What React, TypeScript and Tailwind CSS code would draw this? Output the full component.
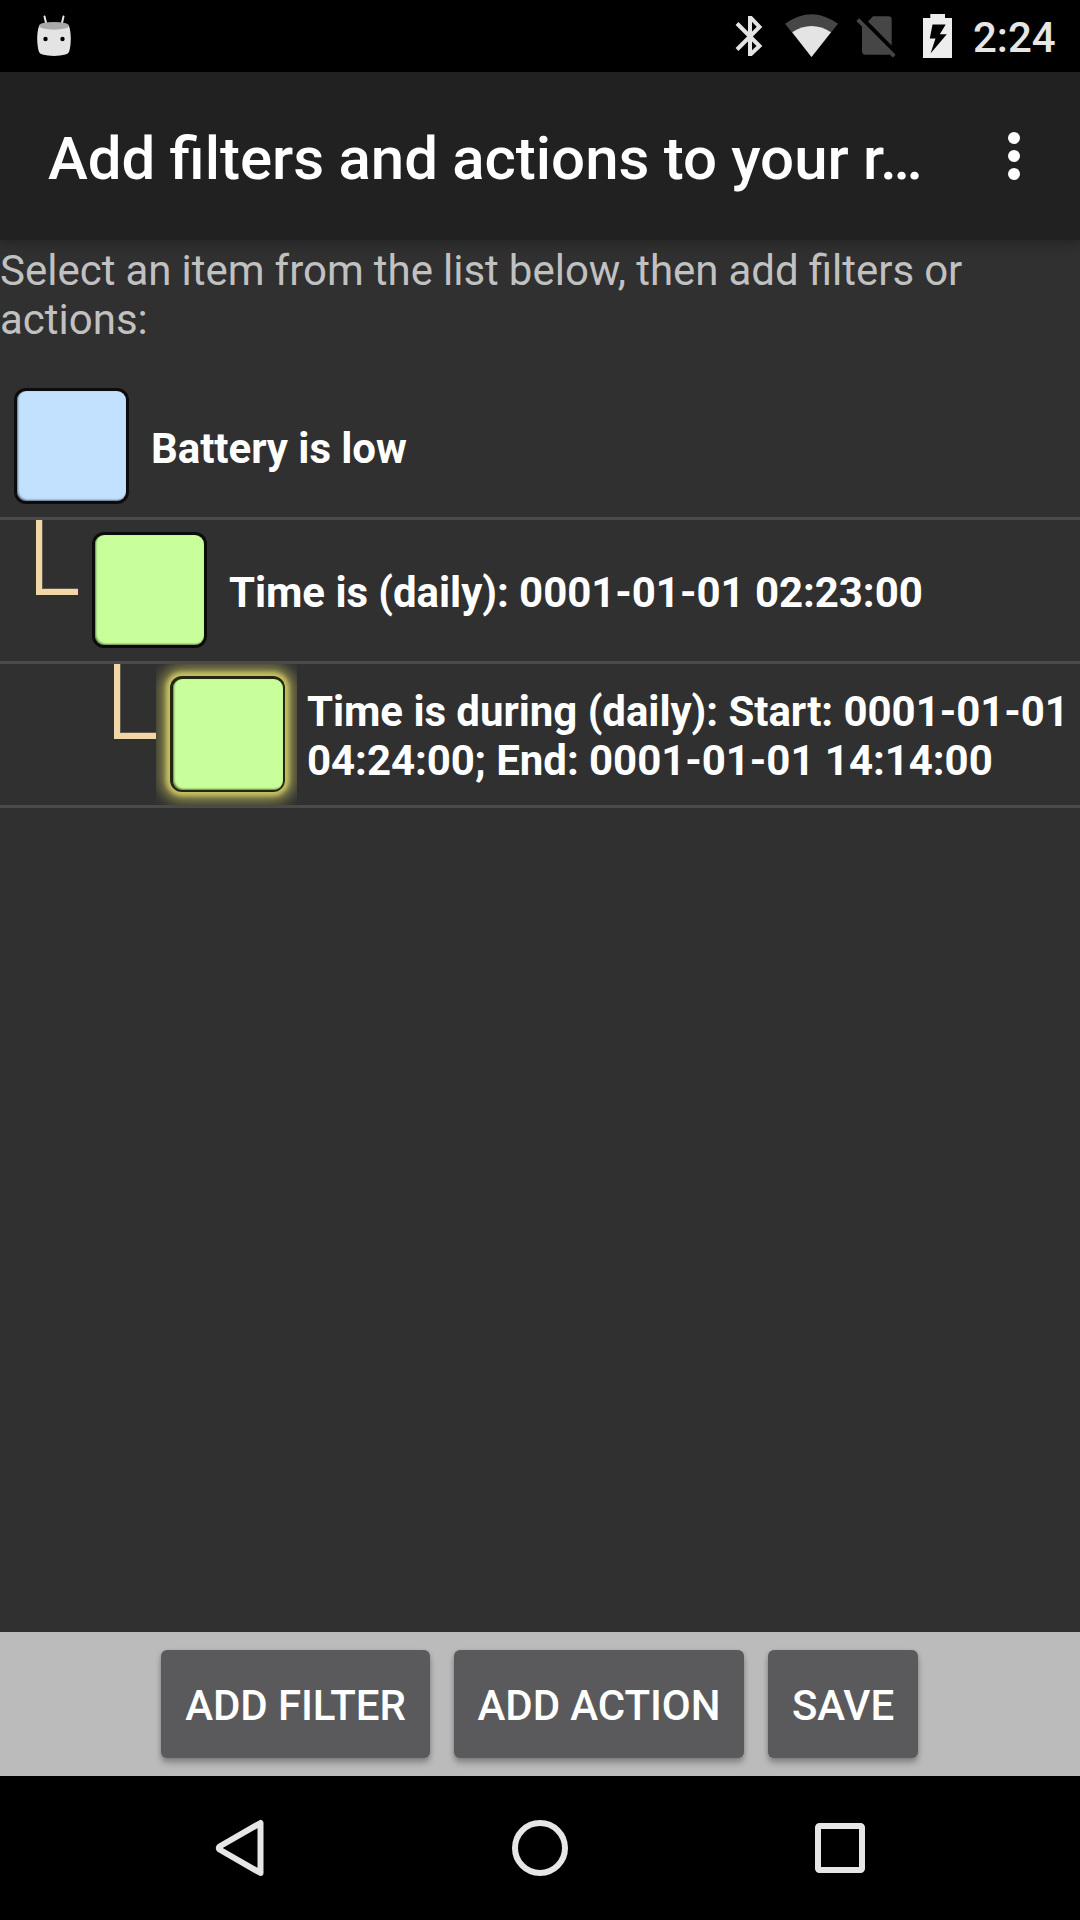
import React from "react";

type Row = { label: string; indent: number; fill: string; selected?: boolean };

const rows: Row[] = [
  { label: "Battery is low", indent: 0, fill: "#c2e0ff" },
  { label: "Time is (daily): 0001-01-01 02:23:00", indent: 1, fill: "#c8ff9b" },
  {
    label: "Time is during (daily): Start: 0001-01-01 04:24:00; End: 0001-01-01 14:14:00",
    indent: 2,
    fill: "#c8ff9b",
    selected: true,
  },
];

function RobotIcon() {
  return (
    <svg className="ml-9 h-[42px] w-9" viewBox="36 12 36 42">
      <path d="M44.5 13.5 46.5 22M63.5 13.5 61.5 22" stroke="#e6e6e6" strokeWidth="2" strokeLinecap="round" />
      <path d="M39 23H69C71.5 30 71.3 42 69 49Q67.500 52.800 54 52.900Q40.500 52.800 39 49C36.700 42 36.500 30 39 23Z" fill="#e4e4e4" />
      <ellipse cx="54" cy="22.800" rx="15" ry="3.900" fill="#a9a9a9" />
      <circle cx="45.500" cy="36" r="2.200" fill="#000" />
      <circle cx="62.500" cy="36" r="2.200" fill="#000" />
    </svg>
  );
}

function StatusIcons() {
  return (
    <svg className="h-[72px] w-[228px]" viewBox="732 0 228 72">
      <path d="M737 23.500 759.500 46 751 54H750V18H751L759.500 27 737 49.500" fill="none" stroke="#e4e4e4" strokeWidth="4" />
      <path d="M785 23.800Q811.500 4.500 838 23.800L811.500 57Z" fill="#464646" />
      <path d="M792.200 32.300Q811.500 19.500 831 32.300L811.500 57Z" fill="#e4e4e4" />
      <path d="M873 16.300H888.500Q891.700 16.300 891.700 19.500V45.600L868 21.500ZM862 25.300V51.300Q862 54.800 865.500 54.800H888.500L890 54.400Z" fill="#464646" />
      <path d="M857.800 19.600 894.200 56.200" stroke="#464646" strokeWidth="4" />
      <path fillRule="evenodd" d="M930.300 14H945V18H952V58H923V18H930.300ZM932.500 24.500 929.800 38.500H935.500L930.500 53.500 946.800 34.200H939.800L945.700 24.500Z" fill="#ededed" />
    </svg>
  );
}

function ItemTile({ fill, selected }: { fill: string; selected?: boolean }) {
  return (
    <div className="h-[141px] w-[141px] shrink-0 overflow-hidden pt-3 pl-[14px]">
      <div
        className={
          selected
            ? "h-[116px] w-[115px] rounded-[12px] bg-[#24260f] pt-[3px] pr-[2px] pb-[2px] pl-[3px] shadow-[0_0_4px_4px_#c5c062,0_0_14px_10px_#8f8c4e]"
            : "h-[116px] w-[115px] rounded-[12px] bg-[#0c0c0c] pt-[3px] pr-[3px] pb-[3px] pl-[3px]"
        }
      >
        <div
          className="h-full w-full rounded-[9px] shadow-[inset_1px_-1px_2px_rgba(0,0,0,0.5)]"
          style={{ backgroundColor: fill }}
        />
      </div>
    </div>
  );
}

function Connector() {
  return (
    <div className="h-[141px] w-[42px] shrink-0">
      <div className="h-[75px] w-full border-b-[6px] border-l-[6px] border-[#f1d6a6] shadow-[inset_1px_-1px_0_rgba(241,214,166,0.25)]" />
    </div>
  );
}

function ActionButton({ children, width }: { children: string; width: string }) {
  return (
    <button
      className={`h-[108px] rounded-[6px] bg-[#5a5a5c] pt-[2px] text-[42px] font-medium tracking-[-0.09px] whitespace-nowrap text-white shadow-[0_5px_6px_rgba(0,0,0,0.26),0_1px_4px_rgba(0,0,0,0.15)] ${width}`}
    >
      {children}
    </button>
  );
}

export default function App() {
  return (
    <div className="flex h-[1920px] w-[1080px] flex-col overflow-hidden bg-[#303030] font-['Roboto',sans-serif]">
      <div className="flex h-[72px] shrink-0 items-center justify-between bg-black">
        <RobotIcon />
        <div className="flex items-center">
          <StatusIcons />
          <span className="mr-[23px] ml-[13px] w-[84px] pt-[2px] text-[42px] leading-[49px] font-medium text-[#e6e6e6]">2:24</span>
        </div>
      </div>

      <header className="z-10 flex h-[168px] shrink-0 items-center bg-[#212121] pl-12 shadow-[0_2px_12px_rgba(0,0,0,0.3)]">
        <h1 className="w-[960px] pt-[5px] text-[60px] leading-[70px] font-medium whitespace-nowrap text-white [word-spacing:-0.7px]">
          Add filters and actions to your r…
        </h1>
        <svg className="h-12 w-3" viewBox="0 0 12 48">
          <circle cx="6" cy="6" r="6" fill="#fff" />
          <circle cx="6" cy="24" r="6" fill="#fff" />
          <circle cx="6" cy="42" r="6" fill="#fff" />
        </svg>
      </header>

      <main className="flex flex-1 flex-col">
        <p className="h-[136px] pt-[6px] text-[42px] leading-[49px] text-[#c1c1c1] [word-spacing:-0.4px]">
          Select an item from the list below, then add filters or actions:
        </p>
        {rows.map((row) => (
          <div key={row.label} className="flex h-36 items-center border-b-[3px] border-[#4a4a4a]">
            {row.indent === 1 && <div className="w-9 shrink-0" />}
            {row.indent === 2 && <div className="w-[114px] shrink-0" />}
            {row.indent > 0 && <Connector />}
            <ItemTile fill={row.fill} selected={row.selected} />
            <span className="ml-[10px] pt-[3px] text-[42px] leading-[49px] font-bold tracking-[-0.05px] text-white">{row.label}</span>
          </div>
        ))}
      </main>

      <div className="flex h-36 shrink-0 items-center gap-6 bg-[#bbbbbb] pl-[161px]">
        <ActionButton width="w-[269px]">ADD FILTER</ActionButton>
        <ActionButton width="w-[290px]">ADD ACTION</ActionButton>
        <ActionButton width="w-[150px]">SAVE</ActionButton>
      </div>

      <nav className="flex h-36 shrink-0 items-center bg-black pl-[210px]">
        <svg className="h-[60px] w-[60px]" viewBox="0 0 60 60" fill="none" stroke="#e6e6e6" strokeWidth="6" strokeLinejoin="round">
          <path d="M50.500 5V55L9.500 31.500Q8 30 9.500 28.500Z" />
        </svg>
        <svg className="ml-[240px] h-[60px] w-[60px]" viewBox="0 0 60 60" fill="none" stroke="#e6e6e6" strokeWidth="6">
          <circle cx="30" cy="30" r="25" />
        </svg>
        <svg className="ml-[240px] h-[60px] w-[60px]" viewBox="0 0 60 60" fill="none" stroke="#e6e6e6" strokeWidth="6">
          <rect x="8" y="8" width="44" height="44" rx="1.500" />
        </svg>
      </nav>
    </div>
  );
}
